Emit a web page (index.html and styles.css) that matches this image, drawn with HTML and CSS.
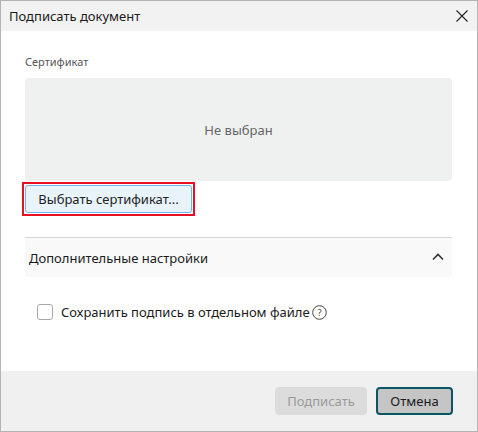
FILE: index.html
```html
<!DOCTYPE html>
<html lang="ru">
<head>
<meta charset="utf-8">
<link rel="stylesheet" href="styles.css">
</head>
<body>
<div class="window">
  <div class="titlebar">
    <span class="title">Подписать документ</span>
    <svg class="close" width="12" height="12" viewBox="0 0 12 12"><path d="M0.5 0.5L11.5 11.5M11.5 0.5L0.5 11.5" stroke="#222" stroke-width="1.1" fill="none"/></svg>
  </div>
  <div class="content">
    <div class="label">Сертификат</div>
    <div class="certbox">Не выбран</div>
    <div class="focusring"><button class="choose">Выбрать сертификат...</button></div>
    <div class="section">
      <span>Дополнительные настройки</span>
      <svg class="chev" width="12" height="8" viewBox="0 0 12 8"><path d="M1 6.5L6 1.5L11 6.5" stroke="#333" stroke-width="1.6" fill="none"/></svg>
    </div>
    <div class="checkrow">
      <span class="checkbox"></span>
      <span class="checklabel">Сохранить подпись в отдельном файле</span>
      <svg class="help" width="15" height="15" viewBox="0 0 15 15"><circle cx="7.5" cy="7.5" r="6.8" stroke="#444" stroke-width="1" fill="none"/><text x="7.5" y="11" text-anchor="middle" font-family="Noto Sans, sans-serif" font-size="9.5" fill="#444">?</text></svg>
    </div>
  </div>
  <div class="footer">
    <button class="btn disabled">Подписать</button>
    <button class="btn cancel">Отмена</button>
  </div>
</div>
</body>
</html>
```
FILE: styles.css
```css
html, body {
  margin: 0;
  padding: 0;
  background: #fff;
}
body {
  font-family: "Noto Sans", "Open Sans", sans-serif;
  color: #1b1b1b;
}
.window {
  width: 478px;
  height: 432px;
  box-sizing: border-box;
  border: 1px solid #b4b4b4;
  display: flex;
  flex-direction: column;
}
.titlebar {
  height: 30px;
  background: #f2f2f2;
  display: flex;
  align-items: center;
  justify-content: space-between;
  padding: 0 9px 0 8px;
  flex-shrink: 0;
}
.title {
  font-size: 13px;
  color: #1a1a1a;
}
.close {
  display: block;
}
.content {
  flex: 1;
  background: #fff;
  padding: 23px 25px 0 24px;
}
.label {
  font-size: 11px;
  color: #555;
  line-height: 16px;
  margin-bottom: 8px;
}
.certbox {
  height: 103px;
  background: #eff1f1;
  border-radius: 4px;
  display: flex;
  align-items: center;
  justify-content: center;
  font-size: 13px;
  color: #666;
}
.focusring {
  display: inline-block;
  border: 2px solid #e81123;
  padding: 1px;
  margin: 1px 0 0 -3px;
}
.choose {
  display: block;
  width: 167px;
  height: 28px;
  background: #e8f3fc;
  border: 1px solid #6fb4ea;
  border-radius: 3px;
  font-family: inherit;
  font-size: 13px;
  color: #222;
  padding: 0;
}
.section {
  margin-top: 21px;
  border-top: 1px solid #d6d6d6;
  background: #f9f9f9;
  border-radius: 0 0 4px 4px;
  height: 39px;
  display: flex;
  align-items: center;
  justify-content: space-between;
  padding: 0 8px 0 4px;
  font-size: 13px;
  color: #1b1b1b;
}
.chev {
  display: block;
  margin-top: -2px;
}
.checkrow {
  margin-top: 26px;
  padding-left: 12px;
  display: flex;
  align-items: center;
  font-size: 13px;
  color: #1b1b1b;
}
.checkbox {
  width: 14px;
  height: 14px;
  border: 1px solid #a8a8a8;
  border-radius: 3px;
  background: #fff;
  margin-right: 8px;
}
.checklabel {
  margin-right: 2px;
}
.help {
  display: block;
}
.footer {
  height: 60px;
  background: #f0f0f0;
  flex-shrink: 0;
  display: flex;
  align-items: center;
  justify-content: flex-end;
  padding: 0 24px 0 0;
  gap: 9px;
}
.btn {
  height: 28px;
  border-radius: 4px;
  font-family: inherit;
  font-size: 13px;
  padding: 0;
  box-sizing: border-box;
}
.disabled {
  width: 92px;
  background: #dcdcdc;
  border: 1px solid #dcdcdc;
  color: #9a9a9a;
}
.cancel {
  width: 77px;
  background: #c5c5c5;
  border: 2px solid #0b5665;
  color: #1a1a1a;
}
```
